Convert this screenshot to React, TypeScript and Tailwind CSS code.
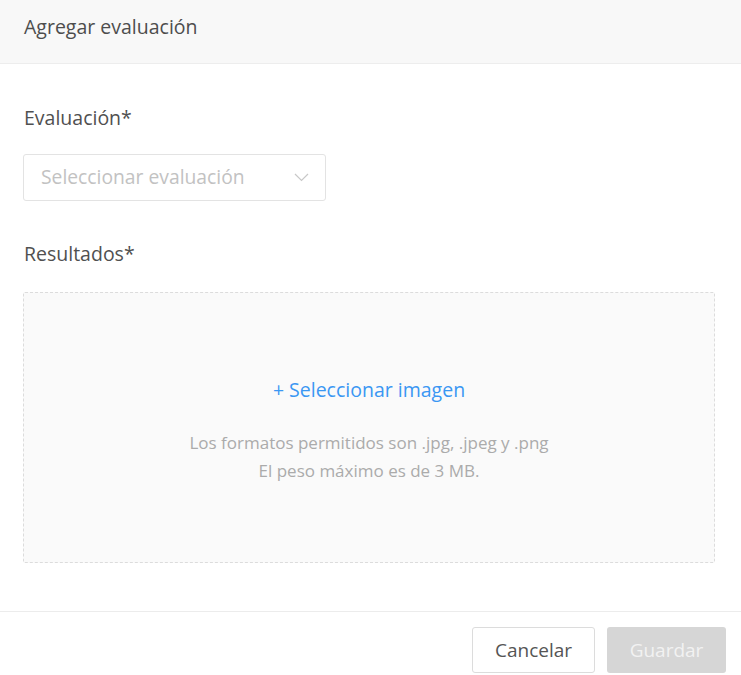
import React from "react";

export default function App() {
  return (
    <div
      className="w-[741px] h-[675px] bg-white flex flex-col overflow-hidden"
      style={{ fontFamily: '"Open Sans", "Noto Sans", sans-serif' }}
    >
      <div className="h-[64px] shrink-0 bg-[#f8f8f8] border-b border-[#ededed] flex items-start pt-[13px] px-6">
        <span className="text-[19.5px] leading-[28px] text-[#4d4d4d]">Agregar evaluación</span>
      </div>
      <div className="flex flex-col pl-[23px] pr-[26px]">
        <div className="mt-[42px] text-[19.5px] leading-[24px] text-[#505050] pl-[1px]">Evaluación*</div>
        <div className="mt-[24px] w-[303px] h-[47px] border border-[#e3e3e3] rounded-[3px] flex items-center justify-between pl-[17px] pr-[16px]">
          <span className="text-[19.3px] text-[#c2c2c2]">Seleccionar evaluación</span>
          <svg width="15" height="9" viewBox="0 0 15 9" fill="none">
            <path d="M1 1 L7.5 7.5 L14 1" stroke="#c8c8c8" strokeWidth="1.2" />
          </svg>
        </div>
        <div className="mt-[41px] text-[19.5px] leading-[24px] text-[#505050] pl-[1px]">Resultados*</div>
        <div className="mt-[26px] h-[271px] border border-dashed border-[#dcdcdc] bg-[#fafafa] rounded-[2px] flex flex-col items-center">
          <div className="mt-[82px] text-[19.5px] leading-[30px] text-[#3a97f3]">+ Seleccionar imagen</div>
          <div className="mt-[24px] text-[17px] leading-[28px] text-[#ababab] text-center">
            <div>Los formatos permitidos son .jpg, .jpeg y .png</div>
            <div>El peso máximo es de 3 MB.</div>
          </div>
        </div>
      </div>
      <div className="mt-[48px] border-t border-[#ececec] flex justify-end gap-3 pr-[15px] pt-[15px]">
        <button className="w-[123px] h-[46px] border border-[#dcdcdc] rounded-[3px] bg-white text-[19px] text-[#555]">
          Cancelar
        </button>
        <button className="w-[119px] h-[46px] rounded-[3px] bg-[#d6d6d6] text-[19px] text-[#f2f2f2]">
          Guardar
        </button>
      </div>
    </div>
  );
}
